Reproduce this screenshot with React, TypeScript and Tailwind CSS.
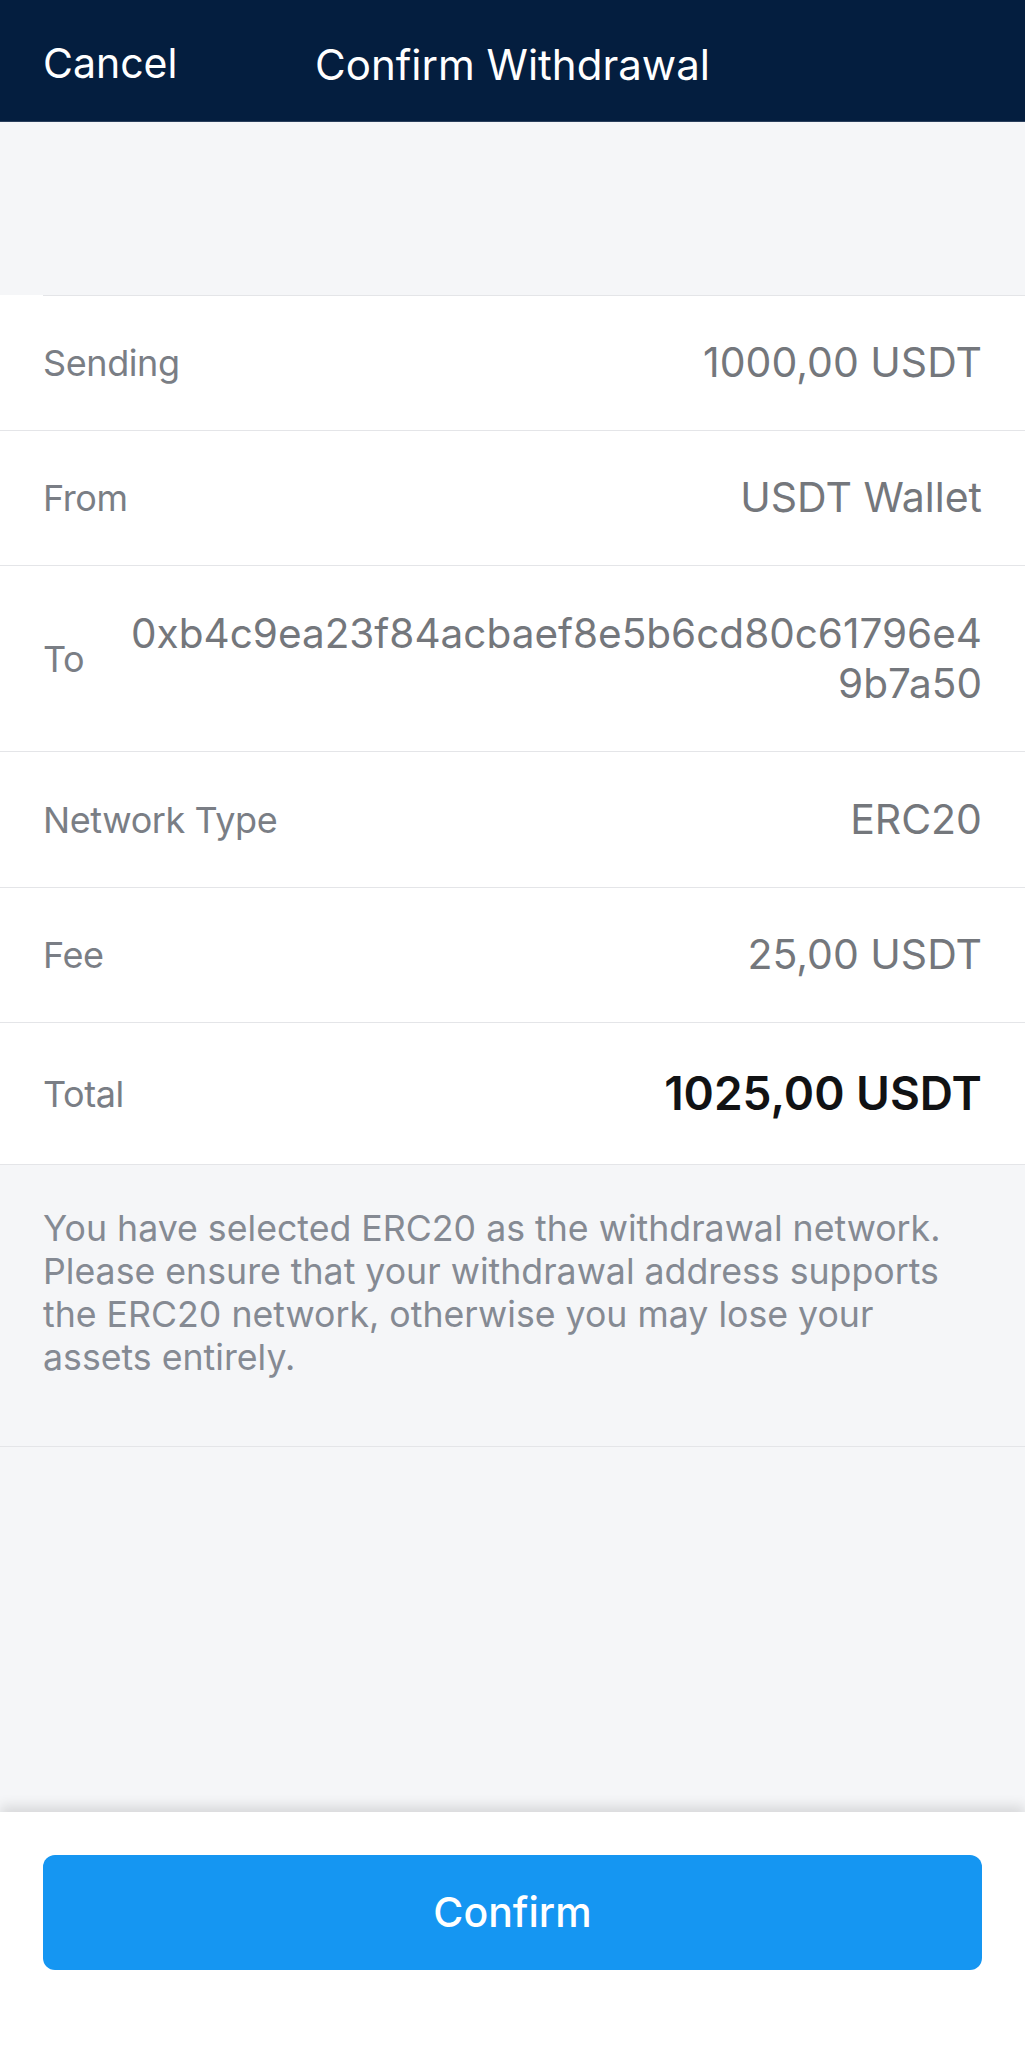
import React from "react";

const rows: { label: string; value: string }[] = [
  { label: "Sending", value: "1000,00 USDT" },
  { label: "From", value: "USDT Wallet" },
];

export default function App() {
  return (
    <div className="w-[1025px] h-[2048px] flex flex-col bg-[#f5f6f8] font-['Inter',sans-serif] overflow-hidden">
      <header className="h-[122px] shrink-0 bg-[#041e3f] grid grid-cols-[1fr_auto_1fr] items-center px-[43px] pt-[7px] border-b border-[#2a3f5c]">
        <span className="text-[41px] text-white justify-self-start">Cancel</span>
        <span className="text-[42px] text-white">Confirm Withdrawal</span>
        <span />
      </header>
      <div className="h-[173px] shrink-0" />
      <div className="bg-white shrink-0">
        <div className="h-px ml-[43px] bg-[#e4e5e8]" />
        {rows.map((r) => (
          <div key={r.label} className="h-[135px] flex items-center justify-between px-[43px] border-b border-[#e4e5e8]">
            <span className="text-[36px] tracking-[-0.4px] text-[#7a7e85]">{r.label}</span>
            <span className="text-[41px] text-[#74777c]">{r.value}</span>
          </div>
        ))}
        <div className="h-[186px] flex items-center justify-between px-[43px] border-b border-[#e4e5e8]">
          <span className="text-[36px] tracking-[-0.4px] text-[#7a7e85]">To</span>
          <span className="w-[866px] text-right break-all text-[40.5px] leading-[50px] text-[#74777c]">
            0xb4c9ea23f84acbaef8e5b6cd80c61796e49b7a50
          </span>
        </div>
        <div className="h-[136px] flex items-center justify-between px-[43px] border-b border-[#e4e5e8]">
          <span className="text-[36px] tracking-[-0.4px] text-[#7a7e85]">Network Type</span>
          <span className="text-[41px] text-[#74777c]">ERC20</span>
        </div>
        <div className="h-[135px] flex items-center justify-between px-[43px] border-b border-[#e4e5e8]">
          <span className="text-[36px] tracking-[-0.4px] text-[#7a7e85]">Fee</span>
          <span className="text-[41px] text-[#74777c]">25,00 USDT</span>
        </div>
        <div className="h-[142px] flex items-center justify-between px-[43px] border-b border-[#e4e5e8]">
          <span className="text-[36px] tracking-[-0.4px] text-[#7a7e85]">Total</span>
          <span className="text-[46px] font-semibold text-[#111214]">1025,00 USDT</span>
        </div>
      </div>
      <div className="shrink-0 pt-[42px] pb-[67px] px-[43px] border-b border-[#e4e5e8]">
        <p className="text-[35.7px] leading-[43px] text-[#858a93]">
          You have selected ERC20 as the withdrawal network. Please ensure that your withdrawal address supports the ERC20 network, otherwise you may lose your assets entirely.
        </p>
      </div>
      <div className="flex-1" />
      <div className="h-[236px] shrink-0 bg-white shadow-[0_-6px_12px_rgba(0,0,0,0.12)] px-[43px] pt-[43px]">
        <button className="w-full h-[115px] rounded-[12px] bg-[#1596f2] text-white text-[41px] font-medium">
          Confirm
        </button>
      </div>
    </div>
  );
}
